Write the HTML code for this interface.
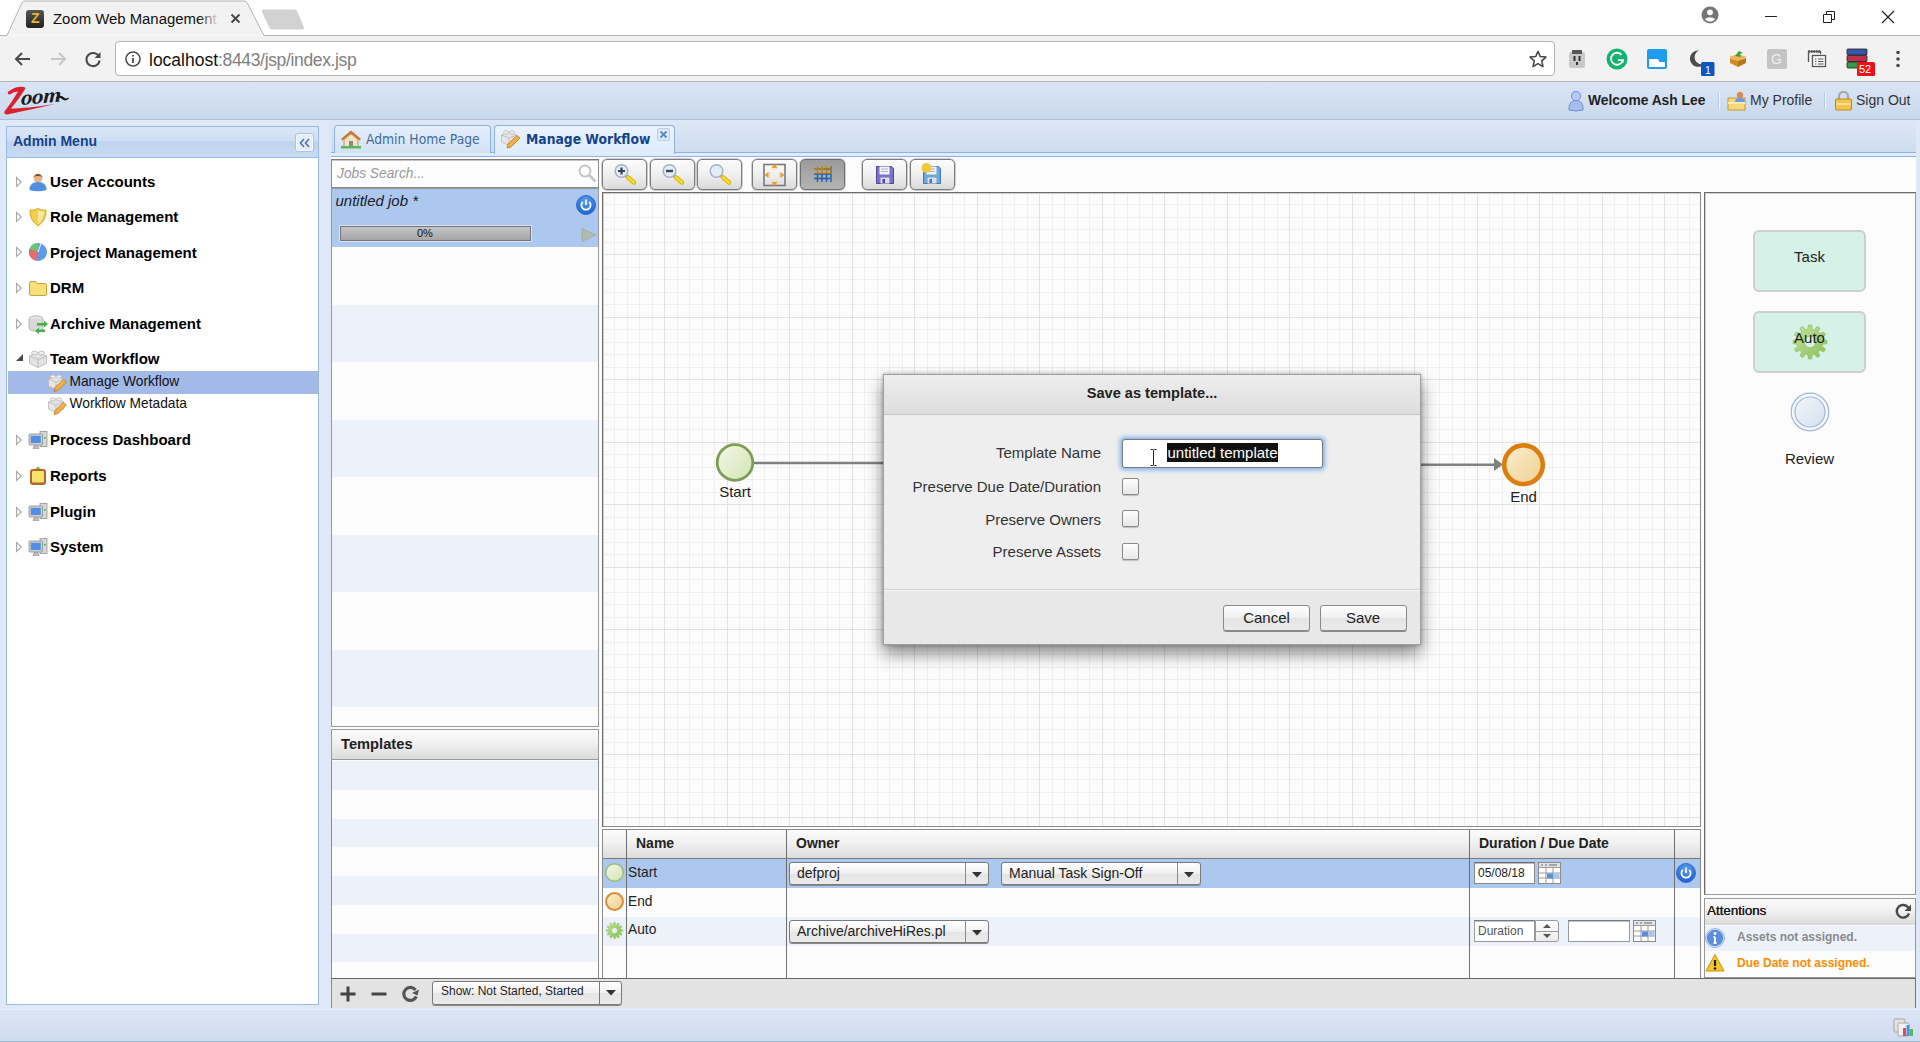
<!DOCTYPE html>
<html lang="en">
<head>
<meta charset="utf-8">
<title>Zoom Web Management</title>
<style>
*{box-sizing:border-box;margin:0;padding:0}
html,body{width:1920px;height:1042px;overflow:hidden}
body{position:relative;background:#dfe8f6;font-family:"Liberation Sans",Arial,sans-serif;font-size:15px;color:#000}
.a{position:absolute}
.t{position:absolute;white-space:nowrap;line-height:1}
svg{position:absolute;overflow:visible}
/* ---------- browser chrome ---------- */
#titlebar{left:0;top:0;width:1920px;height:36px;background:#fff}
#toolbar{left:0;top:36px;width:1920px;height:46px;background:#f2f2f2;border-bottom:1px solid #b8b6b8}
#omni{left:115px;top:41px;width:1440px;height:35px;background:#fff;border:1px solid #b4b4b4;border-radius:4px}
.ui{font-family:"Liberation Sans","DejaVu Sans",sans-serif}
/* ---------- app header ---------- */
#apphead{left:0;top:82px;width:1920px;height:38px;background:linear-gradient(#d9e5f4,#cbd9ee);border-bottom:1px solid #a9bdd6}
/* ---------- left panel ---------- */
#lp{left:6px;top:126px;width:313px;height:879px;background:#fff;border:1px solid #99bbe8}
#lph{left:0;top:0;width:311px;height:31px;background:linear-gradient(#dbe7f6,#cddef3 45%,#bfd3ee 50%,#c9dbf2);border-bottom:1px solid #99bbe8}
.tn{position:absolute;margin-top:.7px;left:43px;font-weight:bold;font-size:15px;line-height:20px;white-space:nowrap}
.ts{position:absolute;margin-top:.7px;left:62.5px;font-size:13.75px;line-height:20px;white-space:nowrap;color:#111}
.arr{position:absolute;left:8px;width:0;height:0;border-left:6px solid #fff;border-top:5px solid transparent;border-bottom:5px solid transparent}
.arr:before{content:"";position:absolute;left:-8px;top:-6px;border-left:8px solid #9a9a9a;border-top:6px solid transparent;border-bottom:6px solid transparent;z-index:-1}

/* ---------- center ---------- */
.tah{font-family:"DejaVu Sans Condensed","Liberation Sans",sans-serif}
#tabstrip{left:331px;top:120px;width:1585px;height:33px;background:linear-gradient(#dde8f6,#cedcf0);border-bottom:1px solid #8db2e3}
#tabspacer{left:331px;top:153px;width:1585px;height:4px;background:#deecfd;border-bottom:1px solid #8db2e3}
#content{left:331px;top:157px;width:1585px;height:850px;background:#fcfcfc}
.tab{position:absolute;top:125px;height:28px;border:1px solid #8db2e3;border-bottom:none;border-radius:4px 4px 0 0}
.gbtn{position:absolute;top:159px;width:45px;height:30.5px;border:1px solid #7c7c7c;border-radius:5px;background:linear-gradient(#fcfcfc,#f0f0f0 50%,#dadada);box-shadow:0 0 0 .5px #a0a0a0}
.gbtn.on{background:linear-gradient(#9a9a9a,#a8a8a8 50%,#b4b4b4);border-color:#6e6e6e}
.row{position:absolute;left:332px;width:266px}
.hdr{position:absolute;background:linear-gradient(#fbfbfb,#f1f1f1 45%,#dadada);border:1px solid #9a9a9a}
.sel{position:absolute;border:1px solid #7a7a7a;border-radius:3px;background:linear-gradient(#ffffff,#f0f0f0 50%,#e4e4e4 51%,#ebebeb);box-shadow:0 1px 0 #8a8a8a}
</style>
</head>
<body>
<!-- ============ BROWSER CHROME ============ -->
<div class="a" id="titlebar"></div>
<div class="a" id="toolbar"></div>
<svg width="300" height="37" style="left:0;top:0">
  <path d="M0 35.5 H7 L22 2.5 Q23 1 25 1 H244 Q246 1 247 2.5 L264 35.5 H1920" fill="#f2f2f2" stroke="#b5b3b5" stroke-width="1"/>
  <path d="M263.500 9.500 H294.500 Q296.500 9.500 297.300 11.500 L303.800 27 Q304.500 29.500 302 29.500 H272 Q270 29.500 269.300 27.500 L262 12 Q261.300 9.500 263.500 9.500 Z" fill="#d2d2d2"/>
</svg>
<div class="a" style="left:264px;top:35px;width:1656px;height:1px;background:#b5b3b5"></div>
<div class="a" style="left:26px;top:10px;width:18px;height:18px;border-radius:3px;background:linear-gradient(#555,#222)"></div>
<div class="t ui" style="left:31px;top:11px;font-size:14px;color:#f0b429;font-weight:bold">Z</div>
<div class="t ui" id="tabtitle" style="left:53px;top:12px;font-size:14.9px;color:#111;width:166px;overflow:hidden">Zoom Web Management</div>
<div class="a" style="left:198px;top:8px;width:22px;height:22px;background:linear-gradient(90deg,rgba(242,242,242,0),#f2f2f2)"></div>
<svg width="12" height="12" style="left:230px;top:13px"><path d="M1.5 1.5 L9.5 9.5 M9.5 1.5 L1.5 9.5" stroke="#444" stroke-width="1.8" fill="none"/></svg>
<!-- window controls -->
<svg width="22" height="22" style="left:1699px;top:4px"><circle cx="11" cy="11" r="8.500" fill="#767676"/><circle cx="11" cy="8.300" r="2.900" fill="#fff"/><path d="M5.800 15 Q11 11.600 16.200 15 Q14 17.800 11 17.800 Q8 17.800 5.800 15Z" fill="#fff"/></svg>
<div class="a" style="left:1765px;top:16px;width:12px;height:1px;background:#222"></div>
<svg width="14" height="14" style="left:1822px;top:10px"><path d="M1.5 4.5 H9.5 V12.5 H1.5 Z M4.5 4.5 V1.5 H12.5 V9.5 H9.5" stroke="#222" fill="none" stroke-width="1"/></svg>
<svg width="14" height="14" style="left:1881px;top:10px"><path d="M1 1 L13 13 M13 1 L1 13" stroke="#222" fill="none" stroke-width="1.2"/></svg>
<!-- nav buttons -->
<svg width="20" height="20" style="left:13px;top:49px"><path d="M17 10 H3 M9 4 L3 10 L9 16" stroke="#4a4a4a" stroke-width="2" fill="none"/></svg>
<svg width="20" height="20" style="left:48px;top:49px"><path d="M3 10 H17 M11 4 L17 10 L11 16" stroke="#c6c6c6" stroke-width="2" fill="none"/></svg>
<svg width="20" height="20" style="left:83px;top:49px"><path d="M15.8 7.2 A6.6 6.6 0 1 0 16.6 11.5" stroke="#4a4a4a" stroke-width="2" fill="none"/><path d="M17.5 3 V9 H11.5 Z" fill="#4a4a4a"/></svg>
<div class="a" id="omni"></div>
<svg width="18" height="18" style="left:124px;top:50px"><circle cx="9" cy="9" r="7" stroke="#4a4a4a" stroke-width="1.6" fill="none"/><path d="M9 8 V13 M9 5 V6.6" stroke="#4a4a4a" stroke-width="1.8"/></svg>
<div class="t ui" id="url" style="left:149px;top:51.5px;font-size:17.5px;color:#111">localhost<span style="color:#808080;letter-spacing:-.35px">:8443/jsp/index.jsp</span></div>
<svg width="20" height="20" style="left:1528px;top:49px"><path d="M10 2.2 L12.3 7.6 L18 8.1 L13.7 11.9 L15 17.6 L10 14.6 L5 17.6 L6.3 11.9 L2 8.1 L7.7 7.6 Z" stroke="#444" stroke-width="1.5" fill="none" stroke-linejoin="round"/></svg>
<!-- extension icons -->
<svg width="20" height="20" style="left:1567px;top:49px"><rect x="2" y="3" width="16" height="16" rx="2" fill="#c9c9c9"/><rect x="5" y="1" width="10" height="4" fill="#555"/><rect x="6.5" y="7" width="2" height="5" fill="#333"/><rect x="11.5" y="7" width="2" height="5" fill="#333"/><rect x="9" y="13" width="2" height="3" fill="#333"/></svg>
<svg width="22" height="22" style="left:1606px;top:48px"><circle cx="11" cy="11" r="10.5" fill="#15b371"/><path d="M15.5 6.8 A6 6 0 1 0 16.8 12.2 H12 M16.8 12.2 V14.6" stroke="#fff" stroke-width="1.8" fill="none"/></svg>
<svg width="22" height="22" style="left:1646px;top:48px"><rect x="1" y="1" width="20" height="20" rx="2" fill="#1e9df0"/><path d="M3 11 H12 L13.5 14 H19 V19 H3 Z" fill="#fff"/></svg>
<svg width="28" height="28" style="left:1687px;top:48px"><path d="M12 2.5 A8.2 8.2 0 1 0 17.5 15.8 A7 7 0 0 1 12 2.5 Z" fill="#4d4d4d"/><rect x="14" y="14" width="13.500" height="14" rx="1.500" fill="#0b57c4"/></svg>
<div class="t ui" style="left:1705px;top:64.500px;font-size:10.500px;color:#fff">1</div>
<svg width="22" height="22" style="left:1727px;top:48px"><path d="M2 9 L11 6 L20 9 L11 13 Z" fill="#f0b24e"/><path d="M3 10 V15 L11 19 V13 Z" fill="#d18a2a"/><path d="M19 10 V15 L11 19 V13 Z" fill="#b97518"/><path d="M8 8 L12 3 L16 5 L13 6 L14 9 Z" fill="#3aa63a"/></svg>
<svg width="22" height="22" style="left:1766px;top:48px"><rect x="1" y="1" width="20" height="20" rx="2" fill="#c4c4c4"/></svg>
<div class="t ui" style="left:1771px;top:52px;font-size:14px;color:#f0f0f0">G</div>
<svg width="22" height="22" style="left:1806px;top:48px"><path d="M2.5 14 V3.5 H14.5 V6" stroke="#555" fill="none" stroke-width="1.3"/><path d="M2.5 3.5 H14.5" stroke="#555" stroke-width="2.4" stroke-dasharray="1.5 1"/><rect x="6.5" y="7.5" width="13" height="11" fill="#fff" stroke="#555" stroke-width="1.3"/><path d="M9 11 H10.5 M12 11 H17.5 M9 13.5 H10.5 M12 13.5 H17.5 M9 16 H10.5 M12 16 H17.5" stroke="#555" stroke-width="1.2"/></svg>
<svg width="30" height="30" style="left:1846px;top:47px"><rect x="1" y="2" width="20" height="6" rx="1" fill="#3558a8" stroke="#222" stroke-width=".8"/><rect x="1" y="8.5" width="20" height="6" rx="1" fill="#c03048" stroke="#222" stroke-width=".8"/><rect x="1" y="15" width="20" height="6" rx="1" fill="#3a9a48" stroke="#222" stroke-width=".8"/><rect x="11" y="15" width="18" height="14" rx="1.500" fill="#f01018"/></svg>
<div class="t ui" style="left:1859px;top:64px;font-size:11px;color:#fff">52</div>
<svg width="6" height="20" style="left:1895px;top:49px"><circle cx="3" cy="3.5" r="1.8" fill="#4a4a4a"/><circle cx="3" cy="10" r="1.8" fill="#4a4a4a"/><circle cx="3" cy="16.5" r="1.8" fill="#4a4a4a"/></svg>

<!-- ============ APP HEADER ============ -->
<div class="a" id="apphead"></div>
<!-- logo -->
<svg width="72" height="36" style="left:2px;top:84px">
  <path d="M6 8 Q13 2 22 3 Q24 3.500 22.500 6 Q17 15 9 24.500 Q24 24.500 53 20 Q30 25.500 5 30.500 Q1.500 30.500 2.500 27.500 Q10 18 16 7.500 Q11.500 7.500 8 10.500 Q5 10.500 6 8 Z" fill="#d9222e"/>
  <path d="M54 13.500 Q59 10 62 13.500 Q64 15.500 66.500 13.500 L67 14.500 Q63 18 60 15 Q58 13 55 15 Z" fill="#1a1a1a"/>
</svg>
<div class="t" style="left:21px;top:88px;font-family:'Liberation Serif','DejaVu Serif',serif;font-style:italic;font-weight:bold;font-size:21px;color:#1a1a1a;transform-origin:0 50%;transform:rotate(-5deg) skewX(-8deg) scaleX(1.1);letter-spacing:-.3px">oom</div>
<!-- header right -->
<svg width="18" height="22" style="left:1567px;top:90px"><circle cx="9" cy="6" r="4.6" fill="#b9c9f2" stroke="#6f8ed8" stroke-width="1"/><path d="M2 20 Q1.5 10.5 9 10.5 Q16.500 10.500 16 20 Q9 22 2 20Z" fill="#a9bcf0" stroke="#6f8ed8" stroke-width="1"/></svg>
<div class="t" style="left:1588px;top:94px;font-size:13.8px;font-weight:bold;color:#222">Welcome Ash Lee</div>
<div class="a" style="left:1718px;top:92px;width:1px;height:17px;background:#b5c8e6"></div>
<div class="a" style="left:1719px;top:92px;width:1px;height:17px;background:#f2f6fc"></div>
<svg width="22" height="22" style="left:1727px;top:90px"><rect x="1" y="8" width="17" height="12" fill="#f5d77c" stroke="#c79a2c" stroke-width="1"/><rect x="1" y="12" width="17" height="2" fill="#fbeab0"/><circle cx="13" cy="5" r="3.2" fill="#d98a5a"/><path d="M8 12 Q8 8 13 8 Q18 8 18 12 Z" fill="#6a9adf"/></svg>
<div class="t" style="left:1750px;top:93px;font-size:14px;color:#333">My Profile</div>
<div class="a" style="left:1824px;top:92px;width:1px;height:17px;background:#b5c8e6"></div>
<div class="a" style="left:1825px;top:92px;width:1px;height:17px;background:#f2f6fc"></div>
<svg width="20" height="22" style="left:1834px;top:90px"><path d="M5 10 V6.5 Q5 2 9.500 2 Q14 2 14 6.5 V10" stroke="#a8a8a8" stroke-width="2.2" fill="none"/><rect x="1.5" y="9" width="16" height="11" rx="1" fill="#f2c44c" stroke="#c08a18" stroke-width="1"/><rect x="2.500" y="13" width="14" height="2" fill="#fbe28e"/></svg>
<div class="t" style="left:1856px;top:93px;font-size:14px;color:#333">Sign Out</div>

<!-- ============ LEFT PANEL ============ -->
<div class="a" id="lp">
  <div class="a" id="lph"></div>
  <div class="t" style="left:6px;top:7px;font-size:14px;font-weight:bold;color:#15428b">Admin Menu</div>
  <div class="a" style="left:288px;top:6px;width:19px;height:19px;border:1px solid #a9c3e8;border-radius:3px;background:#e4eefb;box-shadow:inset 0 0 0 1px #f6faff"></div>
  <svg width="12" height="10" style="left:292px;top:11px"><path d="M5 1 L1.5 5 L5 9 M10 1 L6.5 5 L10 9" stroke="#4a73b5" stroke-width="1.6" fill="none"/></svg>
  <div class="a" style="left:1px;top:244px;width:310px;height:22.500px;background:#a3b9e8"></div>
  <svg width="8" height="12" style="left:8px;top:49px"><path d="M1.500 1.500 L6.300 6 L1.500 10.500 Z" fill="#fff" stroke="#a8a8a8" stroke-width="1.100"/></svg>
  <svg width="20" height="20" style="left:21px;top:45px"><circle cx="10" cy="6" r="4.500" fill="#e9b48a"/><path d="M5.500 5 Q10 -1 14.500 5 Q10 3 5.500 5Z" fill="#7a4a22"/><path d="M1.500 18 Q1.500 10 10 10 Q18.500 10 18.500 18 Q10 20.500 1.500 18Z" fill="#4f8fe0"/></svg>
  <div class="tn" style="top:44.5px">User Accounts</div>
  <svg width="8" height="12" style="left:8px;top:83.5px"><path d="M1.500 1.500 L6.300 6 L1.500 10.500 Z" fill="#fff" stroke="#a8a8a8" stroke-width="1.100"/></svg>
  <svg width="20" height="20" style="left:21px;top:79.5px"><path d="M2 3 Q6 4 10 1.5 Q14 4 18 3 Q18.500 13 10 19 Q1.500 13 2 3Z" fill="#f5cf52" stroke="#d9a520" stroke-width="1"/><path d="M10 3 Q13 5 16 4.500 Q16 12 10 17 Z" fill="#fbe9a0"/></svg>
  <div class="tn" style="top:79px">Role Management</div>
  <svg width="8" height="12" style="left:8px;top:119.4px"><path d="M1.500 1.500 L6.300 6 L1.500 10.500 Z" fill="#fff" stroke="#a8a8a8" stroke-width="1.100"/></svg>
  <svg width="20" height="20" style="left:21px;top:115.4px"><circle cx="10" cy="10" r="9" fill="#5f9ae8"/><path d="M10 10 L10 1 A9 9 0 0 0 1.500 7 Z" fill="#6cc46c"/><path d="M10 10 L1.500 7 A9 9 0 0 0 8 18.800 Z" fill="#e86a6a"/><path d="M10 10 L13 1.500" stroke="#fff" stroke-width="1"/></svg>
  <div class="tn" style="top:114.9px">Project Management</div>
  <svg width="8" height="12" style="left:8px;top:154.6px"><path d="M1.500 1.500 L6.300 6 L1.500 10.500 Z" fill="#fff" stroke="#a8a8a8" stroke-width="1.100"/></svg>
  <svg width="20" height="20" style="left:21px;top:150.6px"><path d="M1.500 5 Q1.500 3.500 3 3.500 H7.500 L9 5.500 H17 Q18.500 5.500 18.500 7 V16 Q18.500 17.500 17 17.500 H3 Q1.500 17.500 1.500 16 Z" fill="#f7e07a" stroke="#c9a63a" stroke-width="1"/></svg>
  <div class="tn" style="top:150.1px">DRM</div>
  <svg width="8" height="12" style="left:8px;top:190.6px"><path d="M1.500 1.500 L6.300 6 L1.500 10.500 Z" fill="#fff" stroke="#a8a8a8" stroke-width="1.100"/></svg>
  <svg width="20" height="20" style="left:21px;top:186.6px"><ellipse cx="8" cy="5" rx="7" ry="3.200" fill="#e4e4e4" stroke="#a8a8a8" stroke-width=".8"/><path d="M1 5 V14 Q1 17 8 17 Q15 17 15 14 V5" fill="#d8d8d8" stroke="#a8a8a8" stroke-width=".8"/><path d="M9 9 H16 V6.500 L20 10 L16 13.500 V11.500 H9 Z" fill="#4cae4c"/><path d="M17 15.500 H11 V13.500 L7 17 L11 20 V18 H17 Z" fill="#4cae4c"/></svg>
  <div class="tn" style="top:186.1px">Archive Management</div>
  <svg width="10" height="10" style="left:8px;top:226.4px"><path d="M8 1 V8 H1 Z" fill="#4a4a4a"/></svg>
  <svg width="20" height="20" style="left:21px;top:221.4px"><path d="M1.500 8 L10 4.500 L18.500 8 V15.500 L10 19.500 L1.500 15.500 Z" fill="#e2e2e2" stroke="#b5b5b5" stroke-width=".8"/><path d="M1.500 8 L10 11.500 L18.500 8 M10 11.500 V19.500" stroke="#b5b5b5" stroke-width=".8" fill="none"/><ellipse cx="6.500" cy="5" rx="3" ry="1.800" fill="#efefef" stroke="#b5b5b5" stroke-width=".8"/><ellipse cx="13.500" cy="5" rx="3" ry="1.800" fill="#efefef" stroke="#b5b5b5" stroke-width=".8"/></svg>
  <div class="tn" style="top:220.9px">Team Workflow</div>
  <svg width="8" height="12" style="left:8px;top:307.3px"><path d="M1.500 1.500 L6.300 6 L1.500 10.500 Z" fill="#fff" stroke="#a8a8a8" stroke-width="1.100"/></svg>
  <svg width="20" height="20" style="left:21px;top:303.3px"><rect x="12" y="1.500" width="7" height="15" fill="#d6d6d6" stroke="#9a9a9a" stroke-width=".8"/><rect x="16" y="7" width="1.600" height="1.600" fill="#3fbf3f"/><rect x="1" y="4" width="13.500" height="11" rx="1" fill="#cfcfcf" stroke="#8f8f8f" stroke-width=".8"/><rect x="2.800" y="5.800" width="10" height="7.200" fill="#4f8fe6"/><path d="M5 18.500 H11 L10 15.500 H6 Z" fill="#bdbdbd" stroke="#8f8f8f" stroke-width=".6"/></svg>
  <div class="tn" style="top:302.8px">Process Dashboard</div>
  <svg width="8" height="12" style="left:8px;top:342.7px"><path d="M1.500 1.500 L6.300 6 L1.500 10.500 Z" fill="#fff" stroke="#a8a8a8" stroke-width="1.100"/></svg>
  <svg width="20" height="20" style="left:21px;top:338.7px"><rect x="2" y="3" width="16" height="16" rx="3" fill="#b5652a"/><rect x="4" y="5" width="12" height="11.500" rx="1" fill="#f7e36a"/><path d="M7 3 L10 .5 L13 3 Z" fill="#7fc24a"/></svg>
  <div class="tn" style="top:338.2px">Reports</div>
  <svg width="8" height="12" style="left:8px;top:378.7px"><path d="M1.500 1.500 L6.300 6 L1.500 10.500 Z" fill="#fff" stroke="#a8a8a8" stroke-width="1.100"/></svg>
  <svg width="20" height="20" style="left:21px;top:374.7px"><rect x="12" y="1.500" width="7" height="15" fill="#d6d6d6" stroke="#9a9a9a" stroke-width=".8"/><rect x="16" y="7" width="1.600" height="1.600" fill="#3fbf3f"/><rect x="1" y="4" width="13.500" height="11" rx="1" fill="#cfcfcf" stroke="#8f8f8f" stroke-width=".8"/><rect x="2.800" y="5.800" width="10" height="7.200" fill="#4f8fe6"/><path d="M5 18.500 H11 L10 15.500 H6 Z" fill="#bdbdbd" stroke="#8f8f8f" stroke-width=".6"/></svg>
  <div class="tn" style="top:374.2px">Plugin</div>
  <svg width="8" height="12" style="left:8px;top:413.8px"><path d="M1.500 1.500 L6.300 6 L1.500 10.500 Z" fill="#fff" stroke="#a8a8a8" stroke-width="1.100"/></svg>
  <svg width="20" height="20" style="left:21px;top:409.8px"><rect x="12" y="1.500" width="7" height="15" fill="#d6d6d6" stroke="#9a9a9a" stroke-width=".8"/><rect x="16" y="7" width="1.600" height="1.600" fill="#3fbf3f"/><rect x="1" y="4" width="13.500" height="11" rx="1" fill="#cfcfcf" stroke="#8f8f8f" stroke-width=".8"/><rect x="2.800" y="5.800" width="10" height="7.200" fill="#4f8fe6"/><path d="M5 18.500 H11 L10 15.500 H6 Z" fill="#bdbdbd" stroke="#8f8f8f" stroke-width=".6"/></svg>
  <div class="tn" style="top:409.3px">System</div>
  <svg width="20" height="20" style="left:40px;top:245px"><path d="M1.500 7 L9 4 L16.500 7 V14 L9 17.500 L1.500 14 Z" fill="#e6e6e6" stroke="#b8b8b8" stroke-width=".8"/><path d="M1.500 7 L9 10 L16.500 7 M9 10 V17.500" stroke="#b8b8b8" stroke-width=".8" fill="none"/><ellipse cx="6" cy="4.500" rx="2.600" ry="1.600" fill="#f2f2f2" stroke="#b8b8b8" stroke-width=".8"/><ellipse cx="12" cy="4.500" rx="2.600" ry="1.600" fill="#f2f2f2" stroke="#b8b8b8" stroke-width=".8"/><path d="M7 19.500 L8 15.500 L16.500 7.500 L19.500 10 L11 18.500 Z" fill="#f2b04a" stroke="#b97a18" stroke-width=".8"/></svg>
  <div class="ts" style="top:244px">Manage Workflow</div>
  <svg width="20" height="20" style="left:40px;top:267.5px"><path d="M1.500 7 L9 4 L16.500 7 V14 L9 17.500 L1.500 14 Z" fill="#e6e6e6" stroke="#b8b8b8" stroke-width=".8"/><path d="M1.500 7 L9 10 L16.500 7 M9 10 V17.500" stroke="#b8b8b8" stroke-width=".8" fill="none"/><ellipse cx="6" cy="4.500" rx="2.600" ry="1.600" fill="#f2f2f2" stroke="#b8b8b8" stroke-width=".8"/><ellipse cx="12" cy="4.500" rx="2.600" ry="1.600" fill="#f2f2f2" stroke="#b8b8b8" stroke-width=".8"/><path d="M7 19.500 L8 15.500 L16.500 7.500 L19.500 10 L11 18.500 Z" fill="#f2b04a" stroke="#b97a18" stroke-width=".8"/></svg>
  <div class="ts" style="top:266.5px">Workflow Metadata</div>
</div>
<!-- ============ CENTER ============ -->
<div class="a" id="tabstrip"></div><div class="a" id="tabspacer"></div><div class="a" id="content"></div>
<div class="tab" style="left:334px;width:157px;background:linear-gradient(#e4eefb,#d3e2f6)"></div>
<div class="tab" style="left:494px;width:181px;height:29px;background:linear-gradient(#eaf2fd,#deecfd)"></div>
<svg width="22" height="20" style="left:340px;top:129px"><path d="M1 10 L11 1.500 L21 10 L19.500 11.500 L11 4.500 L2.500 11.500 Z" fill="#c9742a"/><path d="M4 10.500 L11 5 L18 10.500 V18 H4 Z" fill="#f3e3c0" stroke="#b08a50" stroke-width=".8"/><rect x="9" y="12" width="4" height="6" fill="#8a8a8a"/><rect x="1" y="17" width="20" height="2.500" fill="#5cb85c"/></svg>
<div class="t tah" style="left:366px;top:132.5px;font-size:13.75px;color:#416aa3">Admin Home Page</div>
<svg width="22" height="22" style="left:500px;top:128px"><path d="M1.500 7 L9 4 L16.500 7 V14 L9 17.500 L1.500 14 Z" fill="#e6e6e6" stroke="#b8b8b8" stroke-width=".8"/><path d="M1.500 7 L9 10 L16.500 7 M9 10 V17.500" stroke="#b8b8b8" stroke-width=".8" fill="none"/><ellipse cx="6" cy="4.500" rx="2.600" ry="1.600" fill="#f2f2f2" stroke="#b8b8b8" stroke-width=".8"/><ellipse cx="12" cy="4.500" rx="2.600" ry="1.600" fill="#f2f2f2" stroke="#b8b8b8" stroke-width=".8"/><path d="M7 20 L8 16 L17 7.500 L20 10 L11 19 Z" fill="#f2b04a" stroke="#b97a18" stroke-width=".8"/></svg>
<div class="t tah" style="left:526px;top:132.5px;font-size:13.75px;font-weight:bold;color:#15428b">Manage Workflow</div>
<div class="a" style="left:657px;top:128px;width:13px;height:13px;border:1px solid #b5cdee;border-radius:2px;background:#dce9fa"></div>
<svg width="9" height="9" style="left:659px;top:130px"><path d="M1.500 1.500 L7.500 7.500 M7.500 1.500 L1.500 7.500" stroke="#5f86c4" stroke-width="1.800"/></svg>
<div class="a" style="left:331px;top:159px;width:268px;height:29px;background:#fdfdfd;border:1px solid #8c8c8c;border-top:1px solid #7a7a7a;box-shadow:inset 0 1px 0 #c4c4c4"></div>
<div class="t" style="left:337px;top:166.6px;font-size:13.75px;font-style:italic;color:#9a9a9a">Jobs Search...</div>
<svg width="22" height="22" style="left:577px;top:163px"><circle cx="8" cy="8" r="5.500" stroke="#c4c4c4" stroke-width="1.800" fill="none"/><path d="M12 12 L18.500 18.500" stroke="#c4c4c4" stroke-width="2.600"/></svg>
<div class="a" style="left:331px;top:188px;width:268px;height:539px;background:#fcfcfc;border:1px solid #989898"></div>
<div class="row" style="top:189px;height:57.500px;background:#adc8ee"></div>
<div class="row" style="top:304.5px;height:57.500px;background:#edf1fa"></div>
<div class="row" style="top:419.5px;height:57.500px;background:#edf1fa"></div>
<div class="row" style="top:534.5px;height:57.500px;background:#edf1fa"></div>
<div class="row" style="top:649.5px;height:57.500px;background:#edf1fa"></div>
<div class="t" style="left:335.5px;top:192.6px;font-size:15px;font-style:italic;color:#1a1a2a">untitled job *</div>
<svg width="0" height="0" style="left:0;top:0"><defs><radialGradient id="pwg" cx=".5" cy=".3" r=".7"><stop offset="0" stop-color="#5aa0f2"/><stop offset="1" stop-color="#1f5fd0"/></radialGradient><linearGradient id="gg" x1="0" y1="0" x2="1" y2="1"><stop offset="0" stop-color="#c2e39a"/><stop offset="1" stop-color="#85bb4e"/></linearGradient><linearGradient id="gs" x1="0" y1="0" x2="1" y2="1"><stop offset="0" stop-color="#f2f8e8"/><stop offset="1" stop-color="#d3e4b4"/></linearGradient><linearGradient id="ge" x1="0" y1="0" x2="1" y2="1"><stop offset="0" stop-color="#fbefd2"/><stop offset="1" stop-color="#efcf8e"/></linearGradient><linearGradient id="gr" x1="0" y1="0" x2="1" y2="1"><stop offset="0" stop-color="#f4f7fb"/><stop offset="1" stop-color="#d3dfee"/></linearGradient></defs></svg>
<svg width="20" height="20" style="left:576px;top:194.5px"><circle cx="10" cy="10" r="9.500" fill="url(#pwg)" stroke="#2f6fd0" stroke-width="1"/><path d="M6.800 6.800 A4.600 4.600 0 1 0 13.200 6.800" stroke="#fff" stroke-width="1.700" fill="none"/><path d="M10 4.500 V10" stroke="#fff" stroke-width="1.700"/></svg>
<div class="a" style="left:339px;top:225px;width:193px;height:17px;border:1px solid #d9e2f0;background:#777;padding:1px"><div style="width:100%;height:100%;background:linear-gradient(#c4c4c4,#a6a6a6)"></div></div>
<div class="t" style="left:417px;top:228px;font-size:11px;color:#111">0%</div>
<svg width="16" height="16" style="left:581px;top:227px"><path d="M1 1.500 L14.500 8 L1 14.500 Z" fill="#b3bbb0" stroke="#a0a89c" stroke-width=".8"/></svg>
<div class="hdr" style="left:331px;top:729px;width:268px;height:31px"></div>
<div class="t" id="tmpl" style="left:341px;top:736.7px;font-size:14.700px;font-weight:bold;color:#222">Templates</div>
<div class="a" style="left:331px;top:760px;width:268px;height:219px;background:#fcfcfc;border:1px solid #8c8c8c;border-top:none"></div>
<div class="row" style="top:761px;height:28.750px;background:#edf1fa"></div>
<div class="row" style="top:818.5px;height:28.750px;background:#edf1fa"></div>
<div class="row" style="top:876px;height:28.750px;background:#edf1fa"></div>
<div class="row" style="top:933.5px;height:28.750px;background:#edf1fa"></div>
<div class="a" style="left:332px;top:978px;width:1584px;height:30px;background:#e3e3e3;border-right:1px solid #777"></div><div class="a" style="left:331px;top:978px;width:1585px;height:1px;background:#666;z-index:3"></div>
<div class="a" style="left:331px;top:978px;width:1px;height:30px;background:#8c8c8c"></div>
<svg width="18" height="18" style="left:339px;top:985px"><path d="M9 1.500 V16.500 M1.500 9 H16.500" stroke="#444" stroke-width="3"/></svg>
<svg width="18" height="18" style="left:370px;top:985px"><path d="M1.500 9 H16.500" stroke="#444" stroke-width="3"/></svg>
<svg width="20" height="20" style="left:400px;top:984px"><path d="M15.500 6 A6.500 6.500 0 1 0 16.300 12.500" stroke="#555" stroke-width="3.200" fill="none"/><path d="M19 5.500 L17.500 11.500 L12 9 Z" fill="#555"/></svg>
<div class="sel" style="left:432px;top:981px;width:190px;height:24px"></div><div class="a" style="left:599px;top:982px;width:1px;height:22px;background:#7a7a7a"></div>
<div class="t" style="left:441px;top:985px;font-size:12px;color:#222">Show: Not Started, Started</div>
<svg width="10" height="6" style="left:606px;top:990px"><path d="M0 0 H10 L5 5.500 Z" fill="#333"/></svg>
<div class="gbtn" style="left:602px"></div>
<div class="gbtn" style="left:649.5px"></div>
<div class="gbtn" style="left:697px"></div>
<div class="gbtn" style="left:752px"></div>
<div class="gbtn on" style="left:799.5px"></div>
<div class="gbtn" style="left:862px"></div>
<div class="gbtn" style="left:909.5px"></div>
<div class="a" id="canvas" style="left:602px;top:192px;width:1099px;height:635px;border:1px solid #8a8a8a;border-top:1px solid #6c6c6c;border-left:1px solid #6c6c6c;box-shadow:inset 1px 1px 0 #cfcfcf;background-color:#fcfcfc;background-image:linear-gradient(90deg,#e2e2e2 1px,transparent 1px),linear-gradient(#e2e2e2 1px,transparent 1px),linear-gradient(90deg,#e2e2e2 1px,transparent 1px),linear-gradient(#e2e2e2 1px,transparent 1px),linear-gradient(90deg,#efefef 1px,transparent 1px),linear-gradient(#efefef 1px,transparent 1px),linear-gradient(90deg,#efefef 1px,transparent 1px),linear-gradient(#efefef 1px,transparent 1px);background-size:125px 125px,125px 125px,125px 125px,125px 125px,25px 25px,25px 25px,25px 25px,25px 25px;background-position:61px 0,0 61px,124px 0,0 124px,11px 0,0 11px,24px 0,0 24px"></div>
<svg width="1099" height="635" style="left:602px;top:192px">
<path d="M152 271 H283 M818 272.800 H894" stroke="#808080" stroke-width="2.400" fill="none"/>
<path d="M892 266 L901 272.500 L892 279 Z" fill="#808080"/>
<circle cx="133" cy="270.500" r="17.800" fill="url(#gs)" stroke="#7f9d55" stroke-width="2.800"/>
<circle cx="921.500" cy="272.700" r="19.300" fill="url(#ge)" stroke="#dd7d10" stroke-width="4.600"/>
<text x="133" y="304.700" font-size="15" text-anchor="middle" fill="#222" font-family="Liberation Sans,sans-serif">Start</text>
<text x="921.500" y="309.500" font-size="15" text-anchor="middle" fill="#222" font-family="Liberation Sans,sans-serif">End</text>
</svg>
<div class="a" style="left:1704px;top:192px;width:212px;height:703px;border:1px solid #9a9a9a;border-top:1px solid #6c6c6c;border-left:1px solid #6c6c6c;box-shadow:inset 1px 1px 0 #cfcfcf;background:#fcfcfc"></div>
<div class="a" style="left:1753px;top:230px;width:113px;height:62px;border:2px solid #cfcfcf;border-radius:6px;background:#d6f1e7"></div>
<div class="t" style="left:1753px;width:113px;text-align:center;top:249px;font-size:15px;color:#222">Task</div>
<div class="a" style="left:1753px;top:311px;width:113px;height:62px;border:2px solid #cfcfcf;border-radius:6px;background:#d6f1e7"></div>
<svg width="40" height="40" style="left:1790px;top:322px"><g transform="translate(20 20) scale(1.7)" opacity=".92"><path d="M7.50 -1.23 L9.95 -0.99 L9.95 0.99 L7.50 1.23 L7.11 2.69 L9.11 4.12 L8.12 5.84 L5.88 4.81 L4.81 5.88 L5.84 8.12 L4.12 9.11 L2.69 7.11 L1.23 7.50 L0.99 9.95 L-0.99 9.95 L-1.23 7.50 L-2.69 7.11 L-4.12 9.11 L-5.84 8.12 L-4.81 5.88 L-5.88 4.81 L-8.12 5.84 L-9.11 4.12 L-7.11 2.69 L-7.50 1.23 L-9.95 0.99 L-9.95 -0.99 L-7.50 -1.23 L-7.11 -2.69 L-9.11 -4.12 L-8.12 -5.84 L-5.88 -4.81 L-4.81 -5.88 L-5.84 -8.12 L-4.12 -9.11 L-2.69 -7.11 L-1.23 -7.50 L-0.99 -9.95 L0.99 -9.95 L1.23 -7.50 L2.69 -7.11 L4.12 -9.11 L5.84 -8.12 L4.81 -5.88 L5.88 -4.81 L8.12 -5.84 L9.11 -4.12 L7.11 -2.69 Z M3.4 0 A3.4 3.4 0 1 0 -3.4 0 A3.4 3.4 0 1 0 3.4 0 Z" fill-rule="evenodd" fill="url(#gg)" stroke="#8fbf58" stroke-width=".5"/></g></svg>
<div class="t" style="left:1753px;width:113px;text-align:center;top:330px;font-size:15px;color:#222">Auto</div>
<svg width="44" height="44" style="left:1788px;top:390px"><circle cx="22" cy="22" r="18.800" fill="#f4f7fb" stroke="#9db8d6" stroke-width="1.200"/><circle cx="22" cy="22" r="15" fill="url(#gr)" stroke="#9db8d6" stroke-width="1.200"/></svg>
<div class="t" style="left:1753px;width:113px;text-align:center;top:451px;font-size:15px;color:#222">Review</div>
<div class="hdr" style="left:1704px;top:898px;width:212px;height:28px"></div>
<div class="t" style="left:1707px;top:904px;font-size:13.300px;color:#1a1a1a;text-shadow:.35px 0 0 #1a1a1a">Attentions</div>
<svg width="18" height="18" style="left:1894px;top:902px"><path d="M14.500 6 A6.300 6.300 0 1 0 15 11.500" stroke="#4a4a4a" stroke-width="2.400" fill="none"/><path d="M17 2.500 V9 H10.500 Z" fill="#4a4a4a"/></svg>
<div class="a" style="left:1704px;top:925px;width:212px;height:53px;border:1px solid #9a9a9a;border-top:none;background:#fcfcfc"></div>
<div class="a" style="left:1705px;top:926px;width:210px;height:25px;background:#edf1fa"></div>
<svg width="20" height="20" style="left:1705px;top:928px"><circle cx="10" cy="10" r="9" fill="#5b8fdc" stroke="#dfe8f6" stroke-width="1.600"/><circle cx="10" cy="10" r="9.400" fill="none" stroke="#7aa3e0" stroke-width=".8"/><path d="M10 9 V15 M8.500 9 H10 M8.500 15 H11.500" stroke="#fff" stroke-width="2" fill="none"/><circle cx="10" cy="5.500" r="1.400" fill="#fff"/></svg>
<div class="t" style="left:1737px;top:931px;font-size:12px;font-weight:bold;color:#8a8a8a">Assets not assigned.</div>
<svg width="20" height="20" style="left:1705px;top:953px"><path d="M10 1.500 L19 18 H1 Z" fill="#f7c52a" stroke="#c98f10" stroke-width="1" stroke-linejoin="round"/><path d="M10 7 V13" stroke="#222" stroke-width="2.200"/><circle cx="10" cy="15.500" r="1.300" fill="#222"/></svg>
<div class="t" style="left:1737px;top:957px;font-size:12px;font-weight:bold;color:#ff8c00">Due Date not assigned.</div>
<div class="a" style="left:602px;top:829px;width:1099px;height:149px;border:1px solid #8a8a8a;border-bottom:none;background:#fcfcfc"></div>
<div class="a" style="left:603px;top:858px;width:1097px;height:29.500px;background:#adc8ee"></div>
<div class="a" style="left:603px;top:916.500px;width:1097px;height:29px;background:#edf1fa"></div>
<div class="a" style="left:603px;top:830px;width:1097px;height:28.500px;background:linear-gradient(#fbfbfb,#f1f1f1 45%,#dcdcdc);border-bottom:1px solid #7a7a7a"></div>
<div class="a" style="left:626px;top:830px;width:1.400px;height:148px;background:#6e6e6e"></div>
<div class="a" style="left:786px;top:830px;width:1.400px;height:148px;background:#6e6e6e"></div>
<div class="a" style="left:1469px;top:830px;width:1.400px;height:148px;background:#6e6e6e"></div>
<div class="a" style="left:1673.5px;top:830px;width:1.400px;height:148px;background:#6e6e6e"></div>
<div class="t" style="left:636px;top:836px;font-size:14px;font-weight:bold;color:#222">Name</div>
<div class="t" style="left:796px;top:836px;font-size:14px;font-weight:bold;color:#222">Owner</div>
<div class="t" style="left:1479px;top:836px;font-size:14px;font-weight:bold;color:#222">Duration / Due Date</div>
<svg width="22" height="90" style="left:604px;top:860px"><circle cx="10.500" cy="12.500" r="8.700" fill="url(#gs)" stroke="#9dba74" stroke-width="1.400"/><circle cx="10.500" cy="41.500" r="8.400" fill="url(#ge)" stroke="#dd8a30" stroke-width="2"/><g transform="translate(10.5 70.5) scale(0.84)" opacity="1"><path d="M7.50 -1.23 L9.95 -0.99 L9.95 0.99 L7.50 1.23 L7.11 2.69 L9.11 4.12 L8.12 5.84 L5.88 4.81 L4.81 5.88 L5.84 8.12 L4.12 9.11 L2.69 7.11 L1.23 7.50 L0.99 9.95 L-0.99 9.95 L-1.23 7.50 L-2.69 7.11 L-4.12 9.11 L-5.84 8.12 L-4.81 5.88 L-5.88 4.81 L-8.12 5.84 L-9.11 4.12 L-7.11 2.69 L-7.50 1.23 L-9.95 0.99 L-9.95 -0.99 L-7.50 -1.23 L-7.11 -2.69 L-9.11 -4.12 L-8.12 -5.84 L-5.88 -4.81 L-4.81 -5.88 L-5.84 -8.12 L-4.12 -9.11 L-2.69 -7.11 L-1.23 -7.50 L-0.99 -9.95 L0.99 -9.95 L1.23 -7.50 L2.69 -7.11 L4.12 -9.11 L5.84 -8.12 L4.81 -5.88 L5.88 -4.81 L8.12 -5.84 L9.11 -4.12 L7.11 -2.69 Z M3.4 0 A3.4 3.4 0 1 0 -3.4 0 A3.4 3.4 0 1 0 3.4 0 Z" fill-rule="evenodd" fill="url(#gg)" stroke="#86cc58" stroke-width=".5"/></g></svg>
<div class="t" style="left:628px;top:865.5px;font-size:13.75px;color:#222">Start</div>
<div class="t" style="left:628px;top:894.5px;font-size:13.75px;color:#222">End</div>
<div class="t" style="left:628px;top:923px;font-size:13.75px;color:#222">Auto</div>
<div class="sel" style="left:789px;top:862px;width:200px;height:23px"></div><div class="a" style="left:965px;top:863px;width:1px;height:21px;background:#8a8a8a"></div>
<div class="t" style="left:797px;top:865.5px;font-size:14px;color:#222">defproj</div>
<svg width="10" height="6" style="left:972px;top:871.5px"><path d="M0 0 H10 L5 5.500 Z" fill="#333"/></svg>
<div class="sel" style="left:1001px;top:862px;width:200px;height:23px"></div><div class="a" style="left:1177px;top:863px;width:1px;height:21px;background:#8a8a8a"></div>
<div class="t" style="left:1009px;top:865.5px;font-size:14px;color:#222">Manual Task Sign-Off</div>
<svg width="10" height="6" style="left:1184px;top:871.5px"><path d="M0 0 H10 L5 5.500 Z" fill="#333"/></svg>
<div class="sel" style="left:789px;top:920px;width:200px;height:23px"></div><div class="a" style="left:965px;top:921px;width:1px;height:21px;background:#8a8a8a"></div>
<div class="t" style="left:797px;top:923.5px;font-size:14px;color:#222">Archive/archiveHiRes.pl</div>
<svg width="10" height="6" style="left:972px;top:929.5px"><path d="M0 0 H10 L5 5.500 Z" fill="#333"/></svg>
<div class="a" style="left:1474px;top:862px;width:61px;height:22px;background:#fff;border:1px solid #8a8a8a;border-top:1px solid #6e6e6e;box-shadow:inset 0 1px 0 #bbb"></div>
<div class="t" style="left:1478px;top:867px;font-size:12px;color:#222">05/08/18</div>
<svg width="24" height="23" style="left:1538px;top:861.5px"><rect x=".5" y=".5" width="22" height="21" fill="#fff" stroke="#8a8a8a"/><rect x="1" y="1" width="21" height="4" fill="#e4e4e4"/><path d="M3 3 H5 M7 3 H9 M11 3 H19" stroke="#666" stroke-width="1"/><path d="M.5 5.500 H22.500 M8 5.500 V21 M15 5.500 V21 M.5 11 H22.500 M.5 16 H22.500" stroke="#9a9a9a" stroke-width="1"/><rect x="9" y="11.500" width="6" height="5" fill="#5b8fdc"/><rect x="15.500" y="11.500" width="6" height="5" fill="#a8c4ee"/></svg>
<div class="a" style="left:1474px;top:919.5px;width:61px;height:22.5px;background:#fff;border:1px solid #9a9a9a;border-top:1px solid #7a7a7a;box-shadow:inset 0 1px 0 #c4c4c4"></div>
<div class="t" style="left:1478px;top:925px;font-size:12px;color:#555">Duration</div>
<div class="a" style="left:1535px;top:920px;width:24px;height:22px;border:1px solid #9a9a9a;border-radius:0 3px 3px 0;background:linear-gradient(#fff,#ececec)"></div><div class="a" style="left:1536px;top:930.500px;width:22px;height:1px;background:#9a9a9a"></div>
<svg width="8" height="14" style="left:1543px;top:924px"><path d="M0 4 L4 0 L8 4 Z M0 10 L4 14 L8 10 Z" fill="#555"/></svg>
<div class="a" style="left:1568px;top:919.5px;width:62px;height:22.5px;background:#fff;border:1px solid #9a9a9a;border-top:1px solid #7a7a7a;box-shadow:inset 0 1px 0 #c4c4c4"></div>
<svg width="24" height="23" style="left:1633px;top:919.5px"><rect x=".5" y=".5" width="22" height="21" fill="#fff" stroke="#8a8a8a"/><rect x="1" y="1" width="21" height="4" fill="#e4e4e4"/><path d="M3 3 H5 M7 3 H9 M11 3 H19" stroke="#666" stroke-width="1"/><path d="M.5 5.500 H22.500 M8 5.500 V21 M15 5.500 V21 M.5 11 H22.500 M.5 16 H22.500" stroke="#9a9a9a" stroke-width="1"/><rect x="9" y="11.500" width="6" height="5" fill="#5b8fdc"/><rect x="15.500" y="11.500" width="6" height="5" fill="#a8c4ee"/></svg>
<svg width="20" height="20" style="left:1676px;top:863px"><circle cx="10" cy="10" r="9.500" fill="url(#pwg)" stroke="#2f6fd0" stroke-width="1"/><path d="M6.800 6.800 A4.600 4.600 0 1 0 13.200 6.800" stroke="#fff" stroke-width="1.700" fill="none"/><path d="M10 4.500 V10" stroke="#fff" stroke-width="1.700"/></svg>
<svg width="30" height="26" style="left:612px;top:162px"><path d="M15.500 15 L22 20.500" stroke="#e0b000" stroke-width="4.400" stroke-linecap="round"/><path d="M15.500 15 L22 20.500" stroke="#f8da30" stroke-width="2.600" stroke-linecap="round"/><path d="M12 12 L15 14.500" stroke="#8a93a8" stroke-width="1.600"/><circle cx="9.500" cy="9" r="6.300" fill="#e3edf4" stroke="#a3b2c6" stroke-width="1.500"/><path d="M6 9 H13 M9.500 5.500 V12.500" stroke="#3a3f5a" stroke-width="2.200"/></svg>
<svg width="30" height="26" style="left:659.5px;top:162px"><path d="M15.500 15 L22 20.500" stroke="#e0b000" stroke-width="4.400" stroke-linecap="round"/><path d="M15.500 15 L22 20.500" stroke="#f8da30" stroke-width="2.600" stroke-linecap="round"/><path d="M12 12 L15 14.500" stroke="#8a93a8" stroke-width="1.600"/><circle cx="9.500" cy="9" r="6.300" fill="#e3edf4" stroke="#a3b2c6" stroke-width="1.500"/><path d="M6 9 H13" stroke="#3a3f5a" stroke-width="2.400"/></svg>
<svg width="30" height="26" style="left:707px;top:162px"><path d="M15.500 15 L22 20.500" stroke="#e0b000" stroke-width="4.400" stroke-linecap="round"/><path d="M15.500 15 L22 20.500" stroke="#f8da30" stroke-width="2.600" stroke-linecap="round"/><path d="M12 12 L15 14.500" stroke="#8a93a8" stroke-width="1.600"/><circle cx="9.500" cy="9" r="6.300" fill="#e3edf4" stroke="#a3b2c6" stroke-width="1.500"/></svg>
<svg width="24" height="24" style="left:763px;top:163px"><rect x="1" y="1.500" width="21" height="21" fill="none" stroke="#7a7a7a" stroke-width="1.600"/><path d="M11.500 1 L14.500 5 H8.500 Z M11.500 23 L14.500 19 H8.500 Z M1.500 12 L5.500 9 V15 Z M21.500 12 L17.500 9 V15 Z" fill="#f59a23"/><path d="M8.500 6 H14.500 M8.500 18 H14.500 M6.500 9 V15 M16.500 9 V15" stroke="#fbd3a0" stroke-width="1"/></svg>
<svg width="20" height="20" style="left:813.500px;top:166px"><path d="M3.500 0 V8 M8 0 V8 M12.500 0 V8 M0 3 H10" stroke="#b8860b" stroke-width="1.300"/><path d="M17 0 V8 M10 3 H16" stroke="#8a6a20" stroke-width="1.300"/><path d="M3.500 8 V16 M8 8 V16 M12.500 8 V16 M17 8 V16 M0 8 H16 M0 12.500 H16" stroke="#1f5fae" stroke-width="1.400"/><path d="M0 3 H16 M0 7.500 H16" stroke="#9a7a28" stroke-width="1.200"/></svg>
<svg width="24" height="24" style="left:874.5px;top:165px"><path d="M1.500 1.500 H16.500 L18.500 3.500 V18.500 H1.500 Z" fill="#7a72c8" stroke="#4f479a" stroke-width="1"/><rect x="4.500" y="1.500" width="10" height="8" fill="#f4f4fa"/><path d="M6 4 H13 M6 6.500 H13" stroke="#b0b0c8" stroke-width="1"/><rect x="5.500" y="12.500" width="9" height="6" fill="#dcdce8"/><rect x="7.500" y="14" width="2.500" height="4" fill="#4f479a"/></svg>
<svg width="24" height="24" style="left:922px;top:165px"><path d="M1.500 1.500 H16.500 L18.500 3.500 V18.500 H1.500 Z" fill="#6aa8dc" stroke="#3f7ab8" stroke-width="1"/><rect x="4.500" y="1.500" width="10" height="8" fill="#f4f4fa"/><path d="M6 4 H13 M6 6.500 H13" stroke="#b0b0c8" stroke-width="1"/><rect x="5.500" y="12.500" width="9" height="6" fill="#dcdce8"/><rect x="7.500" y="14" width="2.500" height="4" fill="#3f7ab8"/><circle cx="4.500" cy="3" r="5" fill="#f0c840"/></svg>
<!-- ============ DIALOG ============ -->
<div class="a" id="dlg" style="left:883px;top:374px;width:538px;height:271px;background:#eeeeee;border:1px solid #a0a0a0;box-shadow:0 9px 16px rgba(0,0,0,.45),0 0 4px rgba(0,0,0,.3)">
<div class="a" style="left:1px;top:0;width:535px;height:269px">
<div class="a" style="left:-1px;top:216px;width:536px;height:53px;background:#e8e8e8"></div>
<div class="a" style="left:-1px;top:0;width:536px;height:40px;background:linear-gradient(#eeeeee,#dddddd);border-bottom:1px solid #c6c6c6"></div>
<div class="t" id="dlgt" style="left:0;width:534px;text-align:center;top:11px;font-size:14.600px;font-weight:bold;color:#222">Save as template...</div>
<div class="a" style="left:-1px;top:214px;width:536px;height:1px;background:#d2d2d2"></div><div class="a" style="left:-1px;top:215px;width:536px;height:1px;background:#f8f8f8"></div>
<div class="t" style="right:319px;top:70px;font-size:15px;color:#333">Template Name</div>
<div class="t" style="right:319px;top:104px;font-size:15px;color:#333">Preserve Due Date/Duration</div>
<div class="t" style="right:319px;top:136.5px;font-size:15px;color:#333">Preserve Owners</div>
<div class="t" style="right:319px;top:169px;font-size:15px;color:#333">Preserve Assets</div>
<div class="a" style="left:237px;top:64px;width:201px;height:29px;background:#fff;border:1px solid #7a7a7a;border-radius:3px;box-shadow:0 0 4px 1.500px #7fb0e8"></div>
<div class="a" style="left:282px;top:68px;width:111px;height:19px;background:#111"></div>
<div class="t" style="left:282.500px;top:70px;font-size:15px;color:#fff">untitled template</div>
<svg width="7" height="17" style="left:265px;top:74px"><path d="M.5 .5 H2.500 Q3.500 .5 3.500 1.500 Q3.500 .5 4.500 .5 H6.500 M3.500 1.500 V15.500 M.5 16.500 H2.500 Q3.500 16.500 3.500 15.500 Q3.500 16.500 4.500 16.500 H6.500" stroke="#222" stroke-width="1" fill="none"/></svg>
<div class="a" style="left:237px;top:103px;width:16.500px;height:16.500px;background:linear-gradient(#fdfdfd,#e8e8e8);border:1px solid #8a8a8a;border-radius:2px;box-shadow:0 1px 1px rgba(0,0,0,.2)"></div>
<div class="a" style="left:237px;top:135px;width:16.500px;height:16.500px;background:linear-gradient(#fdfdfd,#e8e8e8);border:1px solid #8a8a8a;border-radius:2px;box-shadow:0 1px 1px rgba(0,0,0,.2)"></div>
<div class="a" style="left:237px;top:168px;width:16.500px;height:16.500px;background:linear-gradient(#fdfdfd,#e8e8e8);border:1px solid #8a8a8a;border-radius:2px;box-shadow:0 1px 1px rgba(0,0,0,.2)"></div>
<div class="a" style="left:338px;top:230px;width:87px;height:26px;border:1px solid #8a8a8a;border-radius:3px;background:linear-gradient(#fefefe,#f0f0f0 50%,#e4e4e4 51%,#eaeaea);box-shadow:0 1px 0 #8a8a8a"></div>
<div class="t" style="left:338px;width:87px;text-align:center;top:235px;font-size:15px;color:#222">Cancel</div>
<div class="a" style="left:434.5px;top:230px;width:87px;height:26px;border:1px solid #8a8a8a;border-radius:3px;background:linear-gradient(#fefefe,#f0f0f0 50%,#e4e4e4 51%,#eaeaea);box-shadow:0 1px 0 #8a8a8a"></div>
<div class="t" style="left:434.5px;width:87px;text-align:center;top:235px;font-size:15px;color:#222">Save</div>
</div></div>
<!-- ============ STATUS BAR ============ -->
<div class="a" style="left:0;top:1009px;width:1920px;height:33px;background:linear-gradient(#dbe6f5,#cfdcf0);border-top:1px solid #e6eefa;border-bottom:1px solid #a3b8d6"></div>
<svg width="22" height="22" style="left:1893px;top:1016px"><rect x="1" y="3" width="11" height="13" rx="1" fill="#e2e2e2" stroke="#9a9a9a" stroke-width=".8"/><rect x="5" y="7" width="11" height="13" rx="1" fill="#f0f0f0" stroke="#9a9a9a" stroke-width=".8"/><rect x="10" y="12" width="3" height="8" fill="#e05050"/><rect x="13.500" y="9" width="3" height="11" fill="#4f8fe6"/><rect x="17" y="13" width="3" height="7" fill="#5cb85c"/></svg>

</body>
</html>
